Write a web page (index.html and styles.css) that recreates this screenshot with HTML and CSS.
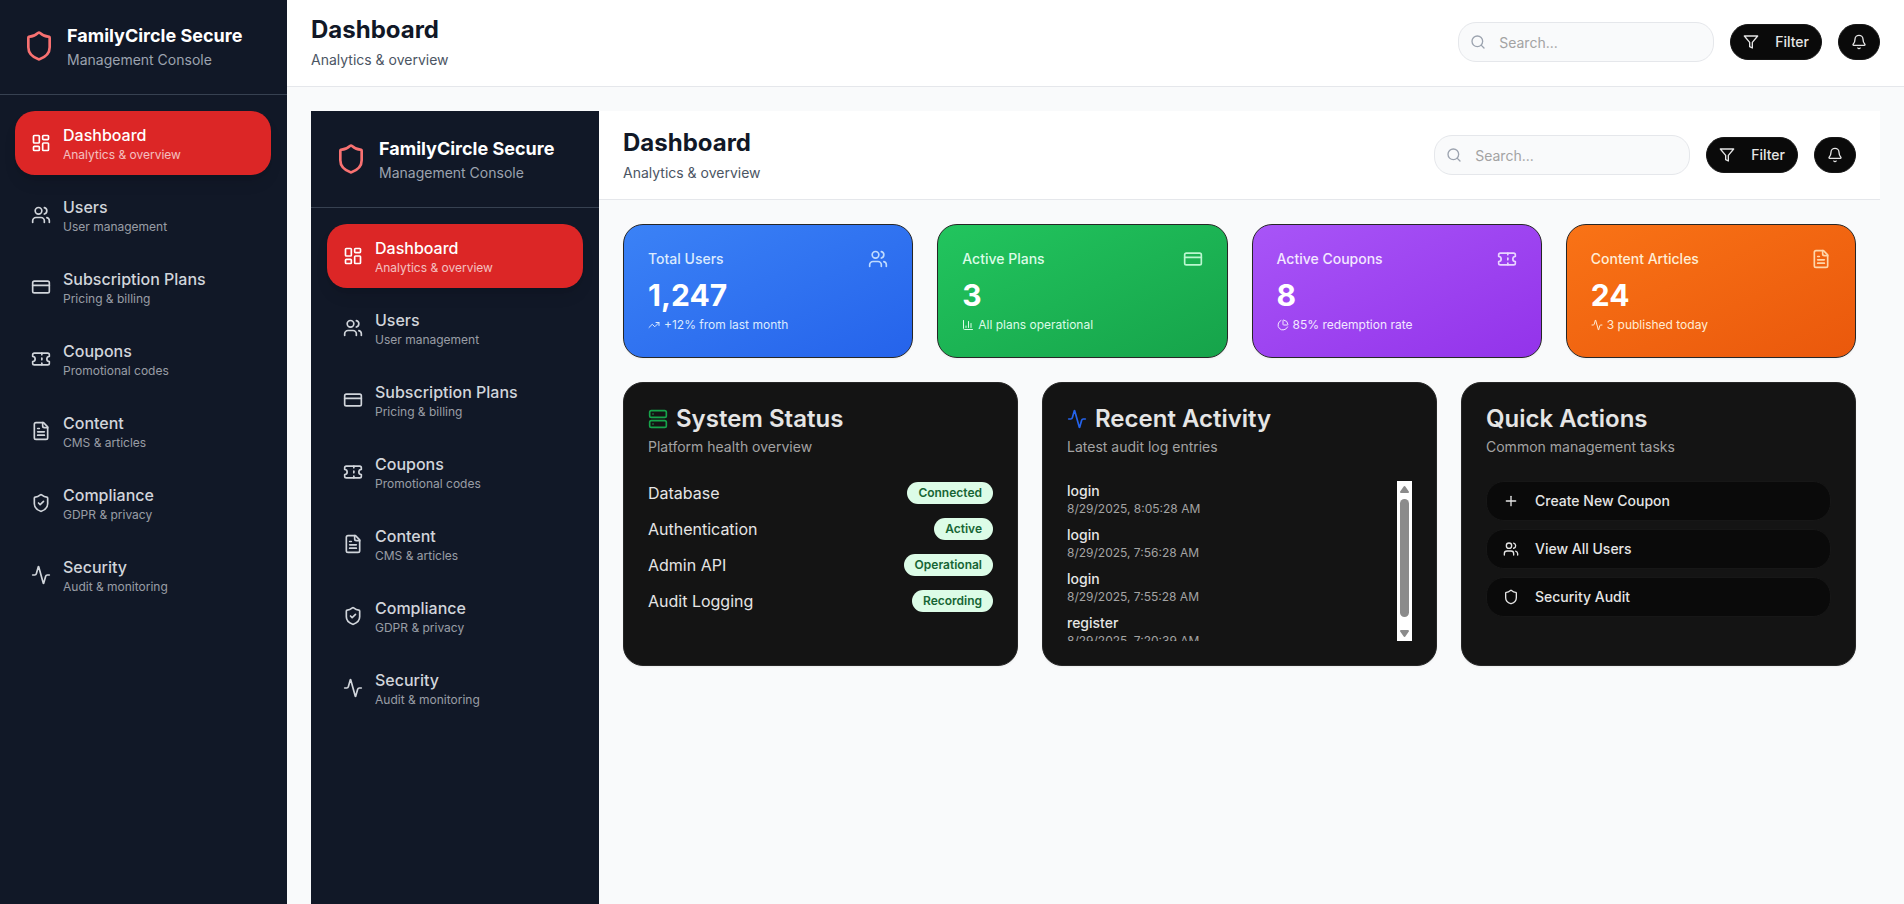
FILE: index.html
```html
<!DOCTYPE html>
<html lang="en">
<head>
<meta charset="utf-8">
<meta name="viewport" content="width=device-width, initial-scale=1">
<title>FamilyCircle Secure</title>
<link rel="stylesheet" href="styles.css">
</head>
<body>
<svg class="sprite" aria-hidden="true">
  <symbol id="i-shield" viewBox="0 0 24 24"><path d="M20 13c0 5-3.5 7.5-7.66 8.95a1 1 0 0 1-.67-.01C7.5 20.5 4 18 4 13V6a1 1 0 0 1 1-1c2 0 4.5-1.2 6.24-2.72a1.17 1.17 0 0 1 1.52 0C14.51 3.81 17 5 19 5a1 1 0 0 1 1 1z"/></symbol>
  <symbol id="i-shield-check" viewBox="0 0 24 24"><path d="M20 13c0 5-3.5 7.5-7.66 8.95a1 1 0 0 1-.67-.01C7.5 20.5 4 18 4 13V6a1 1 0 0 1 1-1c2 0 4.5-1.2 6.24-2.72a1.17 1.17 0 0 1 1.52 0C14.51 3.81 17 5 19 5a1 1 0 0 1 1 1z"/><path d="m9 12 2 2 4-4"/></symbol>
  <symbol id="i-dashboard" viewBox="0 0 24 24"><rect width="7" height="9" x="3" y="3" rx="1"/><rect width="7" height="5" x="14" y="3" rx="1"/><rect width="7" height="9" x="14" y="12" rx="1"/><rect width="7" height="5" x="3" y="16" rx="1"/></symbol>
  <symbol id="i-users" viewBox="0 0 24 24"><path d="M16 21v-2a4 4 0 0 0-4-4H6a4 4 0 0 0-4 4v2"/><circle cx="9" cy="7" r="4"/><path d="M22 21v-2a4 4 0 0 0-3-3.87"/><path d="M16 3.13a4 4 0 0 1 0 7.75"/></symbol>
  <symbol id="i-card" viewBox="0 0 24 24"><rect width="20" height="14" x="2" y="5" rx="2"/><path d="M2 10h20"/></symbol>
  <symbol id="i-ticket" viewBox="0 0 24 24"><path d="M2 9a3 3 0 0 1 0 6v2a2 2 0 0 0 2 2h16a2 2 0 0 0 2-2v-2a3 3 0 0 1 0-6V7a2 2 0 0 0-2-2H4a2 2 0 0 0-2 2Z"/><path d="M13 5v2"/><path d="M13 17v2"/><path d="M13 11v2"/></symbol>
  <symbol id="i-file" viewBox="0 0 24 24"><path d="M15 2H6a2 2 0 0 0-2 2v16a2 2 0 0 0 2 2h12a2 2 0 0 0 2-2V7Z"/><path d="M14 2v4a2 2 0 0 0 2 2h4"/><path d="M10 9H8"/><path d="M16 13H8"/><path d="M16 17H8"/></symbol>
  <symbol id="i-activity" viewBox="0 0 24 24"><path d="M22 12h-2.48a2 2 0 0 0-1.93 1.46l-2.35 8.36a.25.25 0 0 1-.48 0L9.24 2.18a.25.25 0 0 0-.48 0l-2.35 8.36A2 2 0 0 1 4.49 12H2"/></symbol>
  <symbol id="i-search" viewBox="0 0 24 24"><circle cx="11" cy="11" r="8"/><path d="m21 21-4.3-4.3"/></symbol>
  <symbol id="i-filter" viewBox="0 0 24 24"><path d="M22 3H2l8 9.46V19l4 2v-8.54L22 3z"/></symbol>
  <symbol id="i-bell" viewBox="0 0 24 24"><path d="M10.268 21a2 2 0 0 0 3.464 0"/><path d="M3.262 15.326A1 1 0 0 0 4 17h16a1 1 0 0 0 .74-1.673C19.41 13.956 18 12.499 18 8A6 6 0 0 0 6 8c0 4.499-1.411 5.956-2.738 7.326"/></symbol>
  <symbol id="i-trend" viewBox="0 0 24 24"><path d="M22 7 13.5 15.5l-5-5L2 17"/><path d="M16 7h6v6"/></symbol>
  <symbol id="i-bars" viewBox="0 0 24 24"><path d="M3 3v16a2 2 0 0 0 2 2h16"/><path d="M18 17V9"/><path d="M13 17V5"/><path d="M8 17v-3"/></symbol>
  <symbol id="i-pie" viewBox="0 0 24 24"><path d="M21 12c.552 0 1.005-.449.95-.998a10 10 0 0 0-8.953-8.951c-.55-.055-.998.398-.998.95v8a1 1 0 0 0 1 1z"/><path d="M21.21 15.89A10 10 0 1 1 8 2.83"/></symbol>
  <symbol id="i-server" viewBox="0 0 24 24"><rect width="20" height="8" x="2" y="2" rx="2"/><rect width="20" height="8" x="2" y="14" rx="2"/><path d="M6 6h.01"/><path d="M6 18h.01"/></symbol>
  <symbol id="i-plus" viewBox="0 0 24 24"><path d="M5 12h14"/><path d="M12 5v14"/></symbol>
</svg>

<div class="console console--root">
  <aside class="sidebar">
    <div class="brand">
      <svg class="icon icon--xl"><use href="#i-shield"/></svg>
      <div>
        <p class="brand__name">FamilyCircle Secure</p>
        <p class="brand__sub">Management Console</p>
      </div>
    </div>
    <nav class="nav" aria-label="Main">
      <a class="nav__item nav__item--active" href="#dashboard"><svg class="icon icon--md"><use href="#i-dashboard"/></svg><span class="nav__text"><span class="nav__title">Dashboard</span><span class="nav__sub">Analytics &amp; overview</span></span></a>
      <a class="nav__item" href="#users"><svg class="icon icon--md"><use href="#i-users"/></svg><span class="nav__text"><span class="nav__title">Users</span><span class="nav__sub">User management</span></span></a>
      <a class="nav__item" href="#plans"><svg class="icon icon--md"><use href="#i-card"/></svg><span class="nav__text"><span class="nav__title">Subscription Plans</span><span class="nav__sub">Pricing &amp; billing</span></span></a>
      <a class="nav__item" href="#coupons"><svg class="icon icon--md"><use href="#i-ticket"/></svg><span class="nav__text"><span class="nav__title">Coupons</span><span class="nav__sub">Promotional codes</span></span></a>
      <a class="nav__item" href="#content"><svg class="icon icon--md"><use href="#i-file"/></svg><span class="nav__text"><span class="nav__title">Content</span><span class="nav__sub">CMS &amp; articles</span></span></a>
      <a class="nav__item" href="#compliance"><svg class="icon icon--md"><use href="#i-shield-check"/></svg><span class="nav__text"><span class="nav__title">Compliance</span><span class="nav__sub">GDPR &amp; privacy</span></span></a>
      <a class="nav__item" href="#security"><svg class="icon icon--md"><use href="#i-activity"/></svg><span class="nav__text"><span class="nav__title">Security</span><span class="nav__sub">Audit &amp; monitoring</span></span></a>
    </nav>
  </aside>

  <div class="page">
    <header class="topbar">
      <div class="topbar__heading">
        <h1 class="topbar__title">Dashboard</h1>
        <p class="topbar__sub">Analytics &amp; overview</p>
      </div>
      <div class="topbar__actions">
        <label class="search"><svg class="icon icon--sm search__icon"><use href="#i-search"/></svg><input class="search__input" type="search" placeholder="Search..." aria-label="Search"></label>
        <button class="btn" type="button"><svg class="icon icon--sm"><use href="#i-filter"/></svg>Filter</button>
        <button class="btn" type="button" aria-label="Notifications"><svg class="icon icon--sm"><use href="#i-bell"/></svg></button>
      </div>
    </header>

    <main class="content">
      <div class="console">
        <aside class="sidebar">
          <div class="brand">
            <svg class="icon icon--xl"><use href="#i-shield"/></svg>
            <div>
              <p class="brand__name">FamilyCircle Secure</p>
              <p class="brand__sub">Management Console</p>
            </div>
          </div>
          <nav class="nav" aria-label="Console">
            <a class="nav__item nav__item--active" href="#dashboard"><svg class="icon icon--md"><use href="#i-dashboard"/></svg><span class="nav__text"><span class="nav__title">Dashboard</span><span class="nav__sub">Analytics &amp; overview</span></span></a>
            <a class="nav__item" href="#users"><svg class="icon icon--md"><use href="#i-users"/></svg><span class="nav__text"><span class="nav__title">Users</span><span class="nav__sub">User management</span></span></a>
            <a class="nav__item" href="#plans"><svg class="icon icon--md"><use href="#i-card"/></svg><span class="nav__text"><span class="nav__title">Subscription Plans</span><span class="nav__sub">Pricing &amp; billing</span></span></a>
            <a class="nav__item" href="#coupons"><svg class="icon icon--md"><use href="#i-ticket"/></svg><span class="nav__text"><span class="nav__title">Coupons</span><span class="nav__sub">Promotional codes</span></span></a>
            <a class="nav__item" href="#content"><svg class="icon icon--md"><use href="#i-file"/></svg><span class="nav__text"><span class="nav__title">Content</span><span class="nav__sub">CMS &amp; articles</span></span></a>
            <a class="nav__item" href="#compliance"><svg class="icon icon--md"><use href="#i-shield-check"/></svg><span class="nav__text"><span class="nav__title">Compliance</span><span class="nav__sub">GDPR &amp; privacy</span></span></a>
            <a class="nav__item" href="#security"><svg class="icon icon--md"><use href="#i-activity"/></svg><span class="nav__text"><span class="nav__title">Security</span><span class="nav__sub">Audit &amp; monitoring</span></span></a>
          </nav>
        </aside>

        <div class="page">
          <header class="topbar">
            <div class="topbar__heading">
              <h2 class="topbar__title">Dashboard</h2>
              <p class="topbar__sub">Analytics &amp; overview</p>
            </div>
            <div class="topbar__actions">
              <label class="search"><svg class="icon icon--sm search__icon"><use href="#i-search"/></svg><input class="search__input" type="search" placeholder="Search..." aria-label="Search console"></label>
              <button class="btn" type="button"><svg class="icon icon--sm"><use href="#i-filter"/></svg>Filter</button>
              <button class="btn" type="button" aria-label="Console notifications"><svg class="icon icon--sm"><use href="#i-bell"/></svg></button>
            </div>
          </header>

          <div class="content">
            <section class="stats" aria-label="Key figures">
              <article class="stat stat--blue">
                <div class="stat__head"><h3 class="stat__label">Total Users</h3><svg class="icon icon--md"><use href="#i-users"/></svg></div>
                <p class="stat__value">1,247</p>
                <p class="stat__note"><svg class="icon icon--xs"><use href="#i-trend"/></svg>+12% from last month</p>
              </article>
              <article class="stat stat--green">
                <div class="stat__head"><h3 class="stat__label">Active Plans</h3><svg class="icon icon--md"><use href="#i-card"/></svg></div>
                <p class="stat__value">3</p>
                <p class="stat__note"><svg class="icon icon--xs"><use href="#i-bars"/></svg>All plans operational</p>
              </article>
              <article class="stat stat--purple">
                <div class="stat__head"><h3 class="stat__label">Active Coupons</h3><svg class="icon icon--md"><use href="#i-ticket"/></svg></div>
                <p class="stat__value">8</p>
                <p class="stat__note"><svg class="icon icon--xs"><use href="#i-pie"/></svg>85% redemption rate</p>
              </article>
              <article class="stat stat--orange">
                <div class="stat__head"><h3 class="stat__label">Content Articles</h3><svg class="icon icon--md"><use href="#i-file"/></svg></div>
                <p class="stat__value">24</p>
                <p class="stat__note"><svg class="icon icon--xs"><use href="#i-activity"/></svg>3 published today</p>
              </article>
            </section>

            <section class="panels" aria-label="Overview">
              <article class="panel">
                <h3 class="panel__title"><svg class="icon icon--md icon--green"><use href="#i-server"/></svg>System Status</h3>
                <p class="panel__sub">Platform health overview</p>
                <ul class="status">
                  <li class="status__row"><span>Database</span><span class="badge">Connected</span></li>
                  <li class="status__row"><span>Authentication</span><span class="badge">Active</span></li>
                  <li class="status__row"><span>Admin API</span><span class="badge">Operational</span></li>
                  <li class="status__row"><span>Audit Logging</span><span class="badge">Recording</span></li>
                </ul>
              </article>
              <article class="panel">
                <h3 class="panel__title"><svg class="icon icon--md icon--blue"><use href="#i-activity"/></svg>Recent Activity</h3>
                <p class="panel__sub">Latest audit log entries</p>
                <div class="scroller">
                  <ul class="log" tabindex="0">
                    <li><p class="log__event">login</p><p class="log__time">8/29/2025, 8:05:28 AM</p></li>
                    <li><p class="log__event">login</p><p class="log__time">8/29/2025, 7:56:28 AM</p></li>
                    <li><p class="log__event">login</p><p class="log__time">8/29/2025, 7:55:28 AM</p></li>
                    <li><p class="log__event">register</p><p class="log__time">8/29/2025, 7:20:39 AM</p></li>
                  </ul>
                  <div class="scrollbar" aria-hidden="true">
                    <svg class="scrollbar__arrow" viewBox="0 0 15 18"><path d="M7.5 6 11 11H4Z"/></svg>
                    <div class="scrollbar__track"><div class="scrollbar__thumb"></div></div>
                    <svg class="scrollbar__arrow" viewBox="0 0 15 18"><path d="M7.5 13 11 8H4Z"/></svg>
                  </div>
                </div>
              </article>
              <article class="panel">
                <h3 class="panel__title">Quick Actions</h3>
                <p class="panel__sub">Common management tasks</p>
                <div class="actions">
                  <button class="btn btn--wide" type="button"><svg class="icon icon--sm"><use href="#i-plus"/></svg>Create New Coupon</button>
                  <button class="btn btn--wide" type="button"><svg class="icon icon--sm"><use href="#i-users"/></svg>View All Users</button>
                  <button class="btn btn--wide" type="button"><svg class="icon icon--sm"><use href="#i-shield"/></svg>Security Audit</button>
                </div>
              </article>
            </section>
          </div>
        </div>
      </div>
    </main>
  </div>
</div>
</body>
</html>
```

FILE: styles.css
```css
*, *::before, *::after { box-sizing: border-box; }

body {
  margin: 0;
  background: #f9fafb;
  color: #111827;
  font-family: Inter, "Liberation Sans", sans-serif;
  font-size: 16px;
  line-height: 24px;
}

h1, h2, h3, p, ul { margin: 0; padding: 0; }
ul { list-style: none; }
a { color: inherit; text-decoration: none; }
button, input { font: inherit; }

.sprite { display: none; }

.icon {
  flex: none;
  fill: none;
  stroke: currentColor;
  stroke-width: 2;
  stroke-linecap: round;
  stroke-linejoin: round;
}
.icon--xs { width: 12px; height: 12px; }
.icon--sm { width: 16px; height: 16px; }
.icon--md { width: 20px; height: 20px; }
.icon--xl { width: 32px; height: 32px; color: #f87171; }
.icon--green { color: #16a34a; }
.icon--blue { color: #2563eb; }

/* Shell */
.console {
  --sidebar: 288px;
  --brand-top: 24px;
  --brand-left: 24px;
  --nav-left: 16px;
  --topbar-top: 16px;
  display: flex;
  min-height: 100vh;
}
.console--root {
  --sidebar: 287px;
  --brand-top: 22px;
  --brand-left: 23px;
  --nav-left: 15px;
  --topbar-top: 14px;
  height: 100vh;
  overflow: hidden;
}

.sidebar {
  flex: none;
  width: var(--sidebar);
  background: #111827;
  color: #fff;
}
.brand {
  display: flex;
  align-items: center;
  gap: 12px;
  padding: var(--brand-top) 24px 24px var(--brand-left);
  border-bottom: 1px solid #374151;
}
.brand__name { font-size: 18px; line-height: 28px; font-weight: 700; }
.brand__sub { font-size: 14px; line-height: 20px; color: #9ca3af; }

.nav {
  display: flex;
  flex-direction: column;
  gap: 8px;
  padding: 16px 16px 16px var(--nav-left);
}
.nav__item {
  display: flex;
  align-items: center;
  gap: 12px;
  padding: 12px 16px;
  border-radius: 20px;
  color: #d1d5db;
}
.nav__item--active {
  background: #dc2626;
  color: #fff;
  box-shadow: 0 10px 15px -3px rgb(0 0 0 / 10%), 0 4px 6px -4px rgb(0 0 0 / 10%);
}
.nav__text { display: flex; flex-direction: column; }
.nav__title { font-weight: 500; }
.nav__sub { font-size: 12px; line-height: 16px; font-weight: 400; opacity: .7; }

.page { flex: 1; min-width: 0; }
.topbar {
  display: flex;
  align-items: center;
  justify-content: space-between;
  padding: var(--topbar-top) 24px 16px;
  background: #fff;
  border-bottom: 1px solid #e5e7eb;
}
.topbar__heading { display: grid; gap: 4px; }
.topbar__title { font-size: 24px; line-height: 32px; font-weight: 700; }
.topbar__sub { font-size: 14px; line-height: 20px; color: #4b5563; }
.topbar__actions { display: flex; align-items: center; gap: 16px; }

.search { position: relative; display: flex; align-items: center; }
.search__icon { position: absolute; left: 12px; color: #9ca3af; }
.search__input {
  width: 256px;
  height: 40px;
  padding: 8px 12px 8px 40px;
  border: 1px solid #e5e7eb;
  border-radius: 18px;
  background: #f9fafb;
  color: #111827;
  font-size: 14px;
  line-height: 20px;
  appearance: none;
}
.search__input::placeholder { color: #a3a3a3; }

.btn {
  display: inline-flex;
  align-items: center;
  gap: 16px;
  height: 36px;
  padding: 0 12px;
  border: 1px solid #171717;
  border-radius: 18px;
  background: #0a0a0a;
  color: #e5e5e5;
  font-size: 14px;
  line-height: 20px;
  font-weight: 500;
}
.btn--wide { height: 40px; padding: 0 16px; }

.content { padding: 24px; }

/* Key figures */
.stats {
  display: grid;
  grid-template-columns: repeat(4, minmax(0, 1fr));
  gap: 24px;
}
.stat {
  padding: 24px;
  border: 1px solid #262626;
  border-radius: 20px;
  background: linear-gradient(to bottom right, var(--from), var(--to));
  background-origin: border-box;
  color: #fff;
  box-shadow: 0 1px 2px rgb(0 0 0 / 5%);
}
.stat--blue { --from: #3b82f6; --to: #2563eb; --text: #dbeafe; --icon: #bfdbfe; }
.stat--green { --from: #22c55e; --to: #16a34a; --text: #dcfce7; --icon: #bbf7d0; }
.stat--purple { --from: #a855f7; --to: #9333ea; --text: #f3e8ff; --icon: #e9d5ff; }
.stat--orange { --from: #f97316; --to: #ea580c; --text: #ffedd5; --icon: #fed7aa; }
.stat__head {
  display: flex;
  align-items: center;
  justify-content: space-between;
  padding-bottom: 8px;
  color: var(--icon);
}
.stat__label { font-size: 14px; line-height: 20px; font-weight: 500; color: var(--text); }
.stat__value { font-size: 30px; line-height: 36px; font-weight: 700; }
.stat__note {
  display: flex;
  align-items: center;
  gap: 4px;
  margin-top: 4px;
  font-size: 12px;
  line-height: 16px;
  color: var(--text);
}

/* Panels */
.panels {
  display: grid;
  grid-template-columns: repeat(3, minmax(0, 1fr));
  gap: 24px;
  margin-top: 24px;
}
.panel {
  padding: 24px;
  border: 1px solid #262626;
  border-radius: 20px;
  background: #141414;
  color: #e5e5e5;
  box-shadow: 0 1px 2px rgb(0 0 0 / 5%);
}
.panel__title {
  display: flex;
  align-items: center;
  gap: 8px;
  font-size: 24px;
  line-height: 24px;
  font-weight: 600;
}
.panel__sub {
  margin: 6px 0 24px;
  font-size: 14px;
  line-height: 20px;
  color: #a3a3a3;
}

.status { display: grid; gap: 12px; }
.status__row { display: flex; align-items: center; justify-content: space-between; }
.badge {
  padding: 3px 11px;
  border-radius: 11px;
  background: #dcfce7;
  color: #166534;
  font-size: 12px;
  line-height: 16px;
  font-weight: 600;
}

.scroller { display: flex; height: 160px; }
.log {
  flex: 1;
  display: grid;
  gap: 8px;
  overflow-y: auto;
  scrollbar-width: none;
}
.log__event { font-size: 14px; line-height: 20px; font-weight: 500; }
.log__time { font-size: 12px; line-height: 16px; color: #a3a3a3; }

.scrollbar {
  flex: none;
  display: flex;
  flex-direction: column;
  width: 15px;
  background: #fff;
}
.scrollbar__arrow {
  flex: none;
  width: 15px;
  height: 18px;
  fill: #8b8b8b;
  stroke: #8b8b8b;
  stroke-width: 2;
  stroke-linejoin: round;
}
.scrollbar__track { flex: 1; padding: 0 3px; }
.scrollbar__thumb { height: 95%; border-radius: 5px; background: #8b8b8b; }

.actions { display: grid; gap: 8px; }
```
